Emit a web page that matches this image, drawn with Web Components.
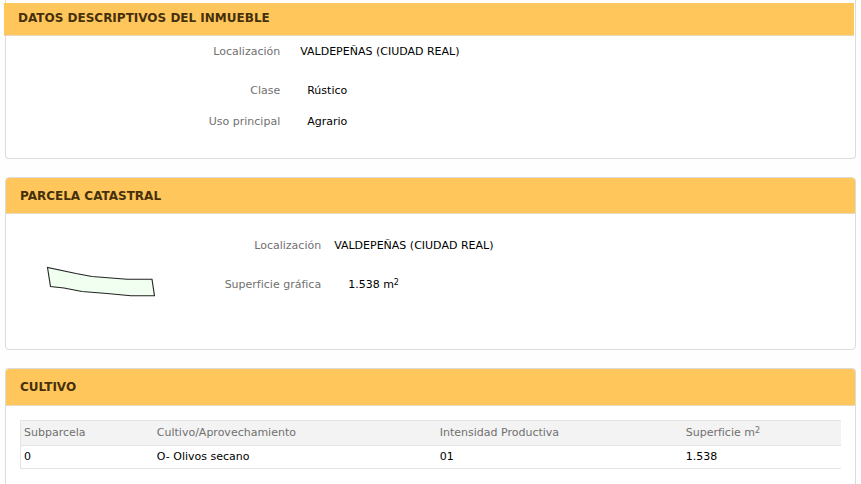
<!DOCTYPE html>
<html lang="es">
<head>
<meta charset="utf-8">
<title>Datos descriptivos del inmueble</title>
<style>
	body {
		display: flex;
		flex-direction: column;
		gap: 18px;
		box-sizing: border-box;
		min-height: 100vh;
		margin: 0;
		padding: 0 5px;
		background: #fefefe;
		color: #000;
		font: 11px/16px "DejaVu Sans", Verdana, sans-serif;
	}
	cat-panel:last-of-type { flex: 1; }
	cat-field[wide] { padding-bottom: 8px; }
	.parcel { display: grid; grid-template-columns: 1fr 4fr; align-items: start; }
	sup { font-size: 8px; line-height: 0; vertical-align: 3px; }
</style>
</head>
<body>
	<cat-panel heading="DATOS DESCRIPTIVOS DEL INMUEBLE" first>
		<cat-fields>
			<cat-field label="Localización" wide>VALDEPEÑAS (CIUDAD REAL)</cat-field>
			<cat-field label="Clase">Rústico</cat-field>
			<cat-field label="Uso principal">Agrario</cat-field>
		</cat-fields>
	</cat-panel>
	<cat-panel heading="PARCELA CATASTRAL" parcel>
		<div class="parcel">
			<cat-parcel-map></cat-parcel-map>
			<cat-fields parcel>
				<cat-field label="Localización" wide>VALDEPEÑAS (CIUDAD REAL)</cat-field>
				<cat-field label="Superficie gráfica">1.538 m<sup>2</sup></cat-field>
			</cat-fields>
		</div>
	</cat-panel>
	<cat-panel heading="CULTIVO" last>
		<cat-crops></cat-crops>
	</cat-panel>

<script>
customElements.define("cat-panel",
	class extends HTMLElement {
		connectedCallback(){
			this.attachShadow({ mode: "open" });
			this.shadowRoot.innerHTML = `
				<style>
					:host {
						display: block;
						border: 1px solid #dcdcdc;
						border-radius: 4px;
						background: #fff;
					}
					:host([first]) { border-top: 0; border-radius: 0 0 4px 4px; padding-top: 3px; }
					:host([last]) { border-bottom: 0; border-radius: 4px 4px 0 0; }
					h2 {
						margin: 0;
						padding: 10px 14px 9px;
						border-bottom: 1px solid #e6d9bd;
						border-radius: 3px 3px 0 0;
						background: #ffc75b;
						color: #46300c;
						font-size: 12px;
						line-height: 16px;
					}
					:host([first]) h2 { margin: 0 1px 0 -2px; padding: 7px 14px 9px; border-radius: 0; }
					.body { padding: 8px 0 28px; }
					:host([parcel]) .body { padding: 24px 0 49px; }
					:host([last]) .body { padding: 14px; }
					:host([last]) h2 { padding-bottom: 10px; }
				</style>
				<h2></h2>
				<div class="body"><slot></slot></div>
			`;
			this.shadowRoot.querySelector("h2").textContent = this.getAttribute("heading");
		}
	}
);

customElements.define("cat-fields",
	class extends HTMLElement {
		connectedCallback(){
			this.attachShadow({ mode: "open" });
			this.shadowRoot.innerHTML = `
				<style>
					:host { display: grid; row-gap: 15px; --label: 32.3%; --gap: 20px; --indent: 7px; }
					:host([parcel]) { --label: 21.4%; --gap: 13px; --indent: 14px; }
				</style>
				<slot></slot>
			`;
		}
	}
);

customElements.define("cat-field",
	class extends HTMLElement {
		connectedCallback(){
			this.attachShadow({ mode: "open" });
			this.shadowRoot.innerHTML = `
				<style>
					:host { display: grid; grid-template-columns: var(--label) 1fr; column-gap: var(--gap); }
					.label { color: #707070; text-align: right; white-space: nowrap; }
					.value { padding-left: var(--indent); }
					:host([wide]) .value { padding-left: 0; }
				</style>
				<span class="label"></span>
				<span class="value"><slot></slot></span>
			`;
			this.shadowRoot.querySelector(".label").textContent = this.getAttribute("label");
		}
	}
);

customElements.define("cat-parcel-map",
	class extends HTMLElement {
		connectedCallback(){
			this.attachShadow({ mode: "open" });
			this.shadowRoot.innerHTML = `
				<style>
					:host { display: block; padding: 28px 0 0 40px; }
					svg { display: block; }
				</style>
				<svg width="112" height="34" viewBox="0 0 112 34" role="img" aria-label="Parcela">
					<path d="M1.5 1.5L4.5 20.5L18 22L36 25.5L61 27.5L85 29.8L108.5 29.8L106 13.2L81 13.2L46 10.5L30 7.5Z"
						fill="#f0fff0" stroke="#222" stroke-width="1.1"/>
				</svg>
			`;
		}
	}
);

customElements.define("cat-crops",
	class extends HTMLElement {
		connectedCallback(){
			this.attachShadow({ mode: "open" });
			this.shadowRoot.innerHTML = `
				<style>
					:host { display: block; }
					table {
						width: 100%;
						table-layout: fixed;
						border-collapse: separate;
						border-spacing: 0;
						border: solid #e4e4e4;
						border-width: 1px 0 0 1px;
					}
					th, td {
						box-sizing: border-box;
						padding: 4px 3px;
						border-bottom: 1px solid #e4e4e4;
						text-align: left;
						line-height: 16px;
					}
					td { padding: 3px; }
					th { background: #f3f3f3; color: #707070; font-weight: normal; }
					th:nth-child(1) { width: 16.2%; }
					th:nth-child(2) { width: 34.5%; }
					th:nth-child(3) { width: 30%; }
					sup { font-size: 8px; line-height: 0; vertical-align: 3px; }
				</style>
				<table>
					<thead>
						<tr><th>Subparcela</th><th>Cultivo/Aprovechamiento</th><th>Intensidad Productiva</th><th>Superficie m<sup>2</sup></th></tr>
					</thead>
					<tbody>
						<tr><td>0</td><td>O- Olivos secano</td><td>01</td><td>1.538</td></tr>
					</tbody>
				</table>
			`;
		}
	}
);
</script>
</body>
</html>
